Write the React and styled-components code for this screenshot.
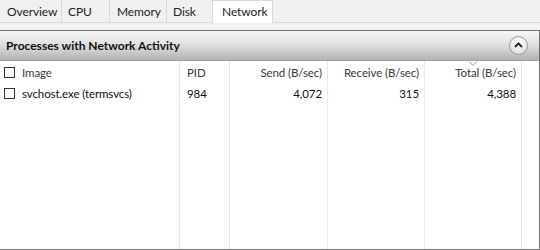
import React from "react";
import styled, { createGlobalStyle } from "styled-components";

const GlobalStyle = createGlobalStyle`
  html, body {
    margin: 0;
    padding: 0;
    background: #ffffff;
  }
  body {
    font-family: Lato, "Noto Sans", "Liberation Sans", sans-serif;
    font-size: 11.5px;
    letter-spacing: -0.1px;
    color: #1e1e1e;
  }
`;

const Page = styled.div`
  width: 540px;
  height: 250px;
  display: flex;
  flex-direction: column;
  background: #f0f0f0;
  overflow: hidden;
`;

const TabStrip = styled.div`
  height: 22px;
  display: flex;
  align-items: flex-end;
  border-bottom: 1px solid #d9d9d9;
  background: #f0f0f0;
`;

const Tab = styled.div`
  box-sizing: border-box;
  width: ${(p) => p.$w}px;
  height: ${(p) => (p.$active ? 23 : 22)}px;
  margin-bottom: ${(p) => (p.$active ? -1 : 0)}px;
  padding-left: ${(p) => p.$pad || 6}px;
  display: flex;
  align-items: ${(p) => (p.$active ? "flex-start" : "center")};
  padding-top: ${(p) => (p.$active ? 3 : 1)}px;
  font-size: 12px;
  color: #222;
  background: ${(p) => (p.$active ? "#ffffff" : "transparent")};
  border-right: 1px solid #d9d9d9;
  border-top: ${(p) => (p.$active ? "1px solid #d9d9d9" : "none")};
`;

const Gap = styled.div`
  height: 7px;
  background: linear-gradient(#f0f0f0 0 3px, #fafafa 3px 4px, #f0f0f0 4px);
`;

const Panel = styled.div`
  flex: 1;
  display: flex;
  flex-direction: column;
  border: 1px solid #707070;
  border-left: none;
  background: #ffffff;
  min-height: 0;
`;

const PanelHeader = styled.div`
  height: 30px;
  box-sizing: border-box;
  display: flex;
  align-items: center;
  justify-content: space-between;
  padding: 0 11px 1px 6px;
  background: linear-gradient(#f7f7f7, #e2e2e2 45%, #b2b2b2);
  border-bottom: 1px solid #a0a0a0;
`;

const Title = styled.span`
  font-weight: bold;
  font-size: 12px;
  letter-spacing: 0;
  color: #111;
`;

const CollapseButton = styled.div`
  width: 17px;
  height: 17px;
  border-radius: 50%;
  border: 1px solid #9a9a9a;
  background: radial-gradient(circle at 50% 30%, #ffffff, #e4e4e4 70%, #cfcfcf);
  display: flex;
  align-items: center;
  justify-content: center;
`;

const Table = styled.div`
  flex: 1;
  display: flex;
  min-height: 0;
`;

const Column = styled.div`
  box-sizing: border-box;
  width: ${(p) => p.$w}px;
  flex: ${(p) => (p.$w ? "none" : 1)};
  display: flex;
  flex-direction: column;
  border-right: ${(p) => (p.$last ? "none" : "1px solid #e3e9f3")};
`;

const HeadCell = styled.div`
  position: relative;
  height: 22px;
  display: flex;
  align-items: center;
  justify-content: ${(p) => (p.$right ? "flex-end" : "flex-start")};
  padding: 0 ${(p) => (p.$right ? 5 : 0)}px 0 ${(p) => p.$indent || 0}px;
  gap: 7px;
  color: #3a3a3a;
`;

const Cell = styled(HeadCell)`
  height: 20px;
  color: #111;
`;

const SortArrow = styled.svg`
  position: absolute;
  top: 0;
  left: 50%;
  transform: translateX(-50%);
`;

const Check = styled.span`
  width: 11px;
  height: 11px;
  box-sizing: border-box;
  border: 1px solid #333;
  background: #fff;
  flex: none;
`;

const columns = [
  { key: "image", label: "Image", w: 180, indent: 4, check: true },
  { key: "pid", label: "PID", w: 50, indent: 7 },
  { key: "send", label: "Send (B/sec)", w: 98, right: true },
  { key: "recv", label: "Receive (B/sec)", w: 97, right: true },
  { key: "total", label: "Total (B/sec)", w: 97, right: true, sorted: true },
];

const rows = [
  { image: "svchost.exe (termsvcs)", pid: "984", send: "4,072", recv: "315", total: "4,388" },
];

const tabs = [
  { label: "Overview", w: 62, pad: 7 },
  { label: "CPU", w: 48 },
  { label: "Memory", w: 57, pad: 7 },
  { label: "Disk", w: 46 },
  { label: "Network", w: 60, pad: 9, active: true },
];

export default function App() {
  return (
    <Page>
      <GlobalStyle />
      <TabStrip>
        {tabs.map((t) => (
          <Tab key={t.label} $w={t.w} $pad={t.pad} $active={t.active}>
            {t.label}
          </Tab>
        ))}
      </TabStrip>
      <Gap />
      <Panel>
        <PanelHeader>
          <Title>Processes with Network Activity</Title>
          <CollapseButton>
            <svg width="9" height="6" viewBox="0 0 9 6">
              <path d="M1 5 L4.5 1.5 L8 5" fill="none" stroke="#2a2a2a" strokeWidth="2" />
            </svg>
          </CollapseButton>
        </PanelHeader>
        <Table>
          {columns.map((c) => (
            <Column key={c.key} $w={c.w}>
              <HeadCell $right={c.right} $indent={c.indent}>
                {c.sorted && (
                  <SortArrow width="9" height="5" viewBox="0 0 9 5">
                    <path d="M0.5 0.5 L4.5 4.5 L8.5 0.5" fill="none" stroke="#9a9a9a" strokeWidth="1" />
                  </SortArrow>
                )}
                {c.check && <Check />}
                {c.label}
              </HeadCell>
              {rows.map((r, i) => (
                <Cell key={i} $right={c.right} $indent={c.indent}>
                  {c.check && <Check />}
                  {r[c.key]}
                </Cell>
              ))}
            </Column>
          ))}
          <Column $last />
        </Table>
      </Panel>
    </Page>
  );
}
